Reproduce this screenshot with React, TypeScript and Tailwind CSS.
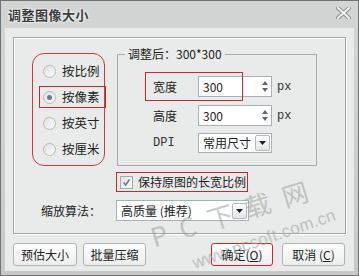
import React from 'react';

const cjk = { fontFamily: '"Noto Sans CJK SC", "Liberation Sans", sans-serif' };
const mono = { fontFamily: '"Liberation Mono", "Noto Sans CJK SC", monospace' };

function Radio({ checked }: { checked?: boolean }) {
  return (
    <span className="flex h-[13px] w-[13px] items-center justify-center rounded-full border border-[#b5b9b7] bg-gradient-to-br from-[#dfe2e0] to-[#fbfbfb]">
      {checked && <span className="h-[5px] w-[5px] rounded-full bg-[#6f7b8a]" />}
    </span>
  );
}

function Spinner({ value }: { value: string }) {
  return (
    <div className="flex h-[21px] w-[74px] items-center border border-[#a9b0b8] bg-white pl-[4px]">
      <span className="flex-1 text-[12px] leading-none text-[#222]">{value}</span>
      <div className="mr-[3px] flex flex-col items-center gap-[3px]">
        <svg width="6" height="4" viewBox="0 0 6 4"><path d="M0 4 L3 0 L6 4 Z" fill="#666" /></svg>
        <svg width="6" height="4" viewBox="0 0 6 4"><path d="M0 0 L3 4 L6 0 Z" fill="#666" /></svg>
      </div>
    </div>
  );
}

function DropBtn() {
  return (
    <span className="flex h-[16px] w-[15px] items-center justify-center rounded-[2px] border border-[#b4b9bf] bg-gradient-to-b from-[#ffffff] to-[#e3e6e8]">
      <svg width="7" height="4" viewBox="0 0 7 4"><path d="M0 0 L3.5 4 L7 0 Z" fill="#222" /></svg>
    </span>
  );
}

function Button({ children, w, red }: { children: React.ReactNode; w: string; red?: boolean }) {
  return (
    <button
      className={`flex h-[23px] ${w} items-center justify-center whitespace-nowrap rounded-[3px] border ${red ? 'border-[#c8282d]' : 'border-[#b1b3b2]'} bg-gradient-to-b from-[#fdfdfd] to-[#eceeed] text-[12px] text-[#222]`}
    >
      {children}
    </button>
  );
}

export default function App() {
  const radios = ['按比例', '按像素', '按英寸', '按厘米'];

  return (
    <div
      className="relative flex h-[276px] w-[359px] flex-col overflow-hidden border border-[#6f7371] bg-gradient-to-b from-[#d2d5d4] to-[#c6c9c8]"
      style={cjk}
    >
      {/* title bar */}
      <div className="flex h-[27px] items-center justify-between pl-[7px] pr-[7px]">
        <span className="text-[13px] font-bold tracking-[0.5px] text-[#3b3d3c] [text-shadow:0_0_3px_#fff,0_0_2px_#fff]">
          调整图像大小
        </span>
        <svg width="15" height="12" viewBox="0 0 15 12" className="mt-[-4px]">
          <path d="M2 1 L13 11 M13 1 L2 11" stroke="#8d8f8e" strokeWidth="4" strokeLinecap="square" />
          <path d="M2 1 L13 11 M13 1 L2 11" stroke="#f2f3f3" strokeWidth="2" strokeLinecap="square" />
        </svg>
      </div>

      {/* body */}
      <div className="mx-[4px] mb-[4px] flex flex-1 flex-col bg-[#e8ebe9] px-[8px] pt-[9px]">
        <div className="flex h-[197px] flex-col border border-[#a2a6a4] pl-[18px] pt-[15px] shadow-[inset_1px_1px_0_#fff,1px_1px_0_#fff]">
          <div className="flex">
            {/* radio group */}
            <div className="flex h-[113px] w-[73px] flex-col gap-[4px] rounded-[12px] border border-[#cf3a3e] pt-[6px]">
              {radios.map((r, i) => (
                <div
                  key={r}
                  className={`ml-[6px] flex h-[22px] w-[67px] items-center gap-[6px] pl-[3px] ${i === 1 ? 'border border-[#c8282d]' : 'border border-transparent'}`}
                >
                  <Radio checked={i === 1} />
                  <span className="text-[12.5px] leading-none text-[#222]">{r}</span>
                </div>
              ))}
            </div>

            {/* size group */}
            <div className="relative ml-[12px] mt-[1px] h-[112px] w-[200px] border border-[#a8acaa]">
              <span className="absolute left-[7px] top-[-9px] bg-[#e8ebe9] px-[3px] text-[12px] leading-[16px] text-[#222]">
                调整后：300*300
              </span>
              <div className="absolute left-[27px] top-[17px] h-[29px] w-[98px] border border-[#c8282d]" />
              <div className="mt-[21px] flex flex-col pl-[35px]">
                <div className="flex h-[21px] items-center">
                  <span className="w-[45px] text-[12px] text-[#222]">宽度</span>
                  <Spinner value="300" />
                  <span className="ml-[5px] text-[12px] text-[#333]" style={mono}>px</span>
                </div>
                <div className="mt-[8px] flex h-[21px] items-center">
                  <span className="w-[45px] text-[12px] text-[#222]">高度</span>
                  <Spinner value="300" />
                  <span className="ml-[5px] text-[12px] text-[#333]" style={mono}>px</span>
                </div>
                <div className="mt-[7px] flex h-[20px] items-center">
                  <span className="w-[45px] text-[12px] text-[#333]" style={mono}>DPI</span>
                  <div className="flex h-[20px] w-[74px] items-center border border-[#a9b0b8] bg-white pl-[4px] pr-[1px]">
                    <span className="flex-1 text-[12px] leading-none text-[#222]">常用尺寸</span>
                    <DropBtn />
                  </div>
                </div>
              </div>
            </div>
          </div>

          {/* keep ratio */}
          <div className="ml-[84px] mt-[6px] flex h-[20px] w-[132px] items-center gap-[5px] whitespace-nowrap border border-[#c8282d] pl-[3px]">
            <span className="flex h-[13px] w-[13px] shrink-0 items-center justify-center border border-[#a3a9b0] bg-gradient-to-br from-[#e1e4e3] to-[#fafafa]">
              <svg width="9" height="9" viewBox="0 0 9 9"><path d="M1.5 4.5 L3.7 7 L7.5 1.5" stroke="#6e7a88" strokeWidth="1.6" fill="none" /></svg>
            </span>
            <span className="text-[12px] leading-none text-[#222]">保持原图的长宽比例</span>
          </div>

          {/* algorithm */}
          <div className="mt-[8px] flex h-[21px] items-center">
            <span className="ml-[9px] w-[75px] text-[12px] text-[#222]">缩放算法：</span>
            <div className="flex h-[21px] w-[133px] items-center border border-[#a9b0b8] bg-white pl-[4px] pr-[1px]">
              <span className="flex-1 text-[12px] leading-none text-[#222]">高质量 (推荐)</span>
              <DropBtn />
            </div>
          </div>
        </div>

        {/* buttons */}
        <div className="mt-[9px] flex items-center">
          <Button w="w-[64px]">预估大小</Button>
          <div className="ml-[6px]">
            <Button w="w-[63px]">批量压缩</Button>
          </div>
          <div className="ml-auto flex items-center gap-[9px] pr-[1px]">
            <Button w="w-[62px]" red>
              确定(<span className="underline">O</span>)
            </Button>
            <Button w="w-[63px]">
              取消 (<span className="underline">C</span>)
            </Button>
          </div>
        </div>
      </div>

      {/* watermark */}
      <div className="pointer-events-none absolute left-[150px] top-[216px] origin-left -rotate-[17deg] whitespace-nowrap text-[26px] tracking-[13px] text-[#8e9290] opacity-45">
        PC下载网
      </div>
      <div
        className="pointer-events-none absolute left-[192px] top-[250px] origin-left -rotate-[19deg] whitespace-nowrap text-[17px] tracking-[0.3px] text-[#a3a6a5] opacity-60"
        style={{ fontFamily: '"Liberation Sans", sans-serif' }}
      >
        www.pcsoft.com.cn
      </div>
    </div>
  );
}
